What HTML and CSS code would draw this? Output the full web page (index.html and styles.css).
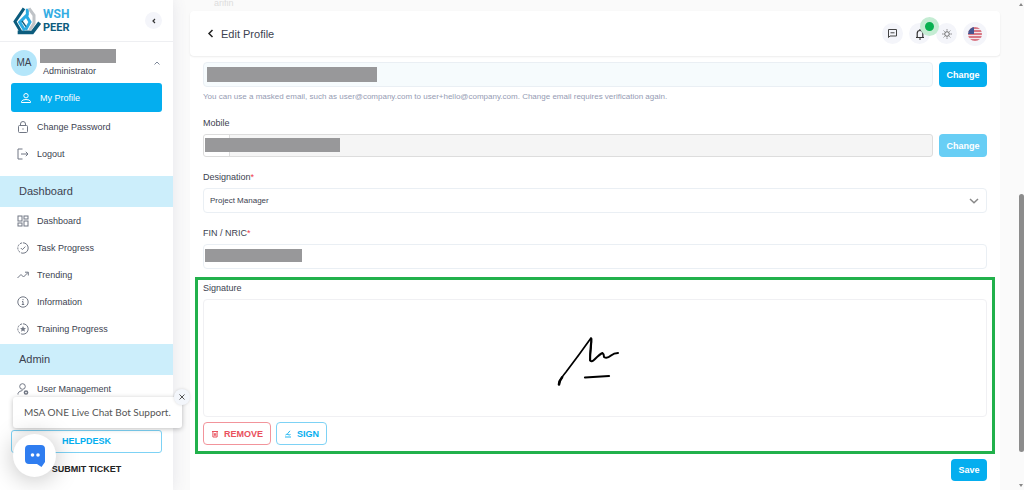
FILE: index.html
```html
<!DOCTYPE html>
<html lang="en">
<head>
  <meta charset="UTF-8">
  <meta name="viewport" content="width=device-width, initial-scale=1">
  <title>Edit Profile - WSH Peer</title>
  <link rel="stylesheet" href="styles.css">
</head>
<body>

  <aside class="sidebar">
    <div class="brand">
      <svg class="brand-mark" viewBox="40 20 84 84" fill="none" stroke-width="9">
        <path d="M73 24L46 64L63 93" stroke="#0c5c7d"/>
        <path d="M54 96H98L120 67" stroke="#0c5c7d" stroke-width="11"/>
        <path d="M83 25V43L60 66L75 90" stroke="#29abe2"/>
        <path d="M80 46L91 65L78 88" stroke="#29abe2"/>
        <path d="M88 24L103 45V69L90 90" stroke="#bfc3c7"/>
        <path d="M67 62L79 79" stroke="#0c5c7d" stroke-width="4"/>
      </svg>
      <div class="brand-name">
        <span class="brand-top">WSH</span>
        <span class="brand-bottom">PEER</span>
      </div>
      <button class="round-btn collapse-btn" aria-label="Collapse menu">
        <svg width="8" height="8" viewBox="0 0 8 8" fill="none" stroke="#333" stroke-width="1.2"><path d="M5 2L3 4L5 6"/></svg>
      </button>
    </div>

    <div class="user">
      <span class="avatar">MA</span>
      <div class="user-info">
        <span class="redacted user-name"></span>
        <span class="user-role">Administrator</span>
      </div>
      <svg class="user-arrow" width="6" height="4" viewBox="0 0 6 4" fill="none" stroke="#7d8799"><path d="M.5 3.5L3 1L5.500 3.500"/></svg>
    </div>

    <nav class="menu menu-user">
      <a class="menu-item active" href="#">
        <svg viewBox="0 0 12 12"><circle cx="6" cy="3.700" r="2.200"/><path d="M1.500 10.500V9.500Q2 7.500 6 7.500T10.500 9.500V10.500Z"/></svg>
        My Profile
      </a>
      <a class="menu-item" href="#">
        <svg viewBox="0 0 12 12"><rect x="1.500" y="4.500" width="9" height="7" rx="1"/><path d="M3.500 4.500V3A2.500 2.500 0 0 1 8.500 3V4.500M6 7.300V8.700"/></svg>
        Change Password
      </a>
      <a class="menu-item" href="#">
        <svg viewBox="0 0 12 12"><path d="M5.500 1H1V11H5.500M4 6H11M8.800 3.800L11 6L8.800 8.200"/></svg>
        Logout
      </a>
    </nav>

    <h2 class="menu-title">Dashboard</h2>
    <nav class="menu">
      <a class="menu-item" href="#">
        <svg viewBox="0 0 12 12"><rect x="1" y="1" width="4" height="5"/><rect x="7" y="1" width="4" height="3"/><rect x="1" y="8" width="4" height="3"/><rect x="7" y="6" width="4" height="5"/></svg>
        Dashboard
      </a>
      <a class="menu-item" href="#">
        <svg viewBox="0 0 12 12"><path d="M6 .8A5.200 5.200 0 0 1 6 11.200"/><path d="M6 11.200A5.200 5.200 0 0 1 6 .8" stroke-dasharray="2.200 1"/><path d="M3.800 6L5.400 7.600L8.300 4.600"/></svg>
        Task Progress
      </a>
      <a class="menu-item" href="#">
        <svg viewBox="0 0 12 12"><path d="M.5 9L4 5.500L6.500 8L11 3.500M8 3.200H11.300V6.500"/></svg>
        Trending
      </a>
      <a class="menu-item" href="#">
        <svg viewBox="0 0 12 12"><circle cx="6" cy="6" r="5.200"/><path d="M5 5.500H6V8.500M4.800 8.500H7.200M6 3V4.200"/></svg>
        Information
      </a>
      <a class="menu-item" href="#">
        <svg viewBox="0 0 12 12"><path d="M6 .8A5.200 5.200 0 0 1 6 11.200"/><path d="M6 11.200A5.200 5.200 0 0 1 6 .8" stroke-dasharray="2.200 1"/><path class="solid" d="M6 3L6.900 5L9 5.200L7.400 6.600L7.900 8.700L6 7.600L4.100 8.700L4.600 6.600L3 5.200L5.100 5Z"/></svg>
        Training Progress
      </a>
    </nav>

    <h2 class="menu-title">Admin</h2>
    <nav class="menu">
      <a class="menu-item" href="#">
        <svg viewBox="0 0 12 12"><circle cx="5.500" cy="3.500" r="2.800"/><path d="M1 11.500V10.500Q1.500 8 5.500 7.500"/><circle cx="9" cy="9.500" r="1.600" stroke-width="1.500"/></svg>
        User Management
      </a>
    </nav>

    <div class="sidebar-footer">
      <a class="helpdesk" href="#">HELPDESK</a>
      <a class="ticket" href="#">SUBMIT TICKET</a>
    </div>

    <!-- chat bot -->
    <div class="chat-message">
      MSA ONE Live Chat Bot Support.
      <button class="chat-close" aria-label="Close message">
        <svg width="6" height="6" viewBox="0 0 6 6" fill="none" stroke="#555"><path d="M.5 .5L5.500 5.500M5.500 .5L.5 5.500"/></svg>
      </button>
    </div>
    <button class="chat-btn" aria-label="Open chat">
      <svg width="22" height="24" viewBox="0 0 22 24">
        <path d="M5 1H17Q21 1 21 5V18L17.500 23L13 20H5Q1 20 1 16V5Q1 1 5 1Z" fill="#2f7df0"/>
        <circle cx="8.500" cy="11" r="1.800" fill="#fff"/>
        <circle cx="14" cy="11" r="1.800" fill="#fff"/>
      </svg>
    </button>
  </aside>

  <main class="main">
    <div class="scrolled-text">arifin</div>

    <header class="topbar">
      <a class="back" href="#" aria-label="Back">
        <svg width="7" height="10" viewBox="0 0 7 10" fill="none" stroke="#222" stroke-width="1.500"><path d="M5.500 1L2 4.500L5.500 8"/></svg>
      </a>
      <h1>Edit Profile</h1>
      <div class="actions">
        <button class="round-btn" aria-label="Messages">
          <svg width="11" height="11" viewBox="0 0 11 11" fill="none" stroke="#444"><path d="M1.500 9.500V1.500H9.500V8H3ZM3.500 4.800H7.500"/></svg>
        </button>
        <button class="round-btn" aria-label="Notifications">
          <svg width="10" height="12" viewBox="0 0 10 12" fill="none" stroke="#333" stroke-width="1.200"><path d="M1 9.500H9M2.200 9.500V5.500Q2.200 2.500 5 2.500T7.800 5.500V9.500M5 1V2.500M4 11H6"/></svg>
          <span class="dot"></span>
        </button>
        <button class="round-btn" aria-label="Theme">
          <svg width="10" height="10" viewBox="0 0 10 10" fill="none" stroke="#666"><circle cx="5" cy="5" r="2.300"/><path d="M5 .3V1.500M5 8.500V9.700M.3 5H1.500M8.500 5H9.700M1.700 1.700L2.500 2.500M7.500 7.500L8.300 8.300M1.700 8.300L2.500 7.500M7.500 2.500L8.300 1.700"/></svg>
        </button>
        <button class="round-btn lang" aria-label="Language">
          <svg width="14" height="14" viewBox="0 0 14 14">
            <clipPath id="flag"><circle cx="7" cy="7" r="7"/></clipPath>
            <g clip-path="url(#flag)">
              <rect width="14" height="14" fill="#f3e6ea"/>
              <path d="M0 1H14M0 4H14M0 7H14M0 10H14M0 13H14" stroke="#d05464" stroke-width="1.500"/>
              <rect width="6" height="7" fill="#465590"/>
            </g>
          </svg>
        </button>
      </div>
    </header>

    <form class="form">
      <div class="field">
        <div class="row">
          <div class="control">
            <input class="input email" type="email" aria-label="Email" readonly>
            <span class="redacted redacted-email"></span>
          </div>
          <button class="btn" type="button">Change</button>
        </div>
        <p class="hint">You can use a masked email, such as user@company.com to user+hello@company.com. Change email requires verification again.</p>
      </div>

      <div class="field">
        <label for="mobile">Mobile</label>
        <div class="row">
          <div class="control">
            <input class="input mobile" id="mobile" type="tel" disabled>
            <span class="redacted redacted-mobile"></span>
          </div>
          <button class="btn" type="button" disabled>Change</button>
        </div>
      </div>

      <div class="field">
        <label for="designation">Designation<span class="required">*</span></label>
        <div class="control">
          <select class="input" id="designation">
            <option>Project Manager</option>
          </select>
          <svg class="select-arrow" width="10" height="6" viewBox="0 0 10 6" fill="none" stroke="#888" stroke-width="1.500"><path d="M1 1L5 4.700L9 1"/></svg>
        </div>
      </div>

      <div class="field">
        <label for="nric">FIN / NRIC<span class="required">*</span></label>
        <div class="control">
          <input class="input" id="nric" type="text">
          <span class="redacted redacted-nric"></span>
        </div>
      </div>

      <section class="signature">
        <h3>Signature</h3>
        <div class="signature-pad">
          <svg width="64" height="50" viewBox="0 0 64 50" fill="none" stroke="#000" stroke-linecap="round" stroke-linejoin="round">
            <path d="M2 48.500Q2 45 5 41.500" stroke-width="2.600"/>
            <path d="M2.500 46Q4 42 9 36Q22 19 34 2Q35 6 34 12T33 24.500" stroke-width="1.700"/>
            <path d="M34.500 3Q33 15 33.200 24Q34 27 38 23Q43 18 45.500 17Q47 18 47 21Q50 23 54 19.500Q57 17 61 17" stroke-width="2"/>
            <path d="M28 41.500L52 40" stroke-width="2.200"/>
          </svg>
        </div>
        <div class="signature-actions">
          <button class="btn-outline remove" type="button">
            <svg width="8" height="8" viewBox="0 0 8 8" fill="none" stroke="currentColor"><path d="M1 1.500H7M1.900 2V7H6.100V2M3.400 3.200V5.800M4.700 3.200V5.800"/></svg>
            REMOVE
          </button>
          <button class="btn-outline sign" type="button">
            <svg width="8" height="8" viewBox="0 0 8 8" fill="none" stroke="currentColor"><path d="M1 7H7M1.500 5Q3 3.500 4 4.500T6.500 4.500M3.500 3.800L6 .8" stroke-width=".9"/></svg>
            SIGN
          </button>
        </div>
      </section>

      <button class="btn save" type="submit">Save</button>
    </form>
  </main>

  <div class="scrollbar">
    <span class="arrow-up"></span>
    <span class="thumb"></span>
    <span class="arrow-down"></span>
  </div>

</body>
</html>
```

FILE: styles.css
```css
* {
  box-sizing: border-box;
}

body {
  margin: 0;
  display: flex;
  height: 100vh;
  overflow: hidden;
  font-family: "Liberation Sans", Arial, sans-serif;
  font-size: 9px;
  color: #3c4250;
  background-color: #fafafa;
}

h1, h2, h3, p {
  margin: 0;
  font-weight: normal;
}

a {
  color: inherit;
  text-decoration: none;
}

button, input, select {
  font-family: inherit;
  font-size: inherit;
  padding: 0;
}

button {
  cursor: pointer;
}

.redacted {
  background-color: #98989a;
}

/* sidebar */
.sidebar {
  position: relative;
  display: flex;
  flex-direction: column;
  width: 173px;
  flex-shrink: 0;
  background-color: #fff;
  box-shadow: 0 0 14px rgba(80,80,120,0.12);
}

.brand {
  display: flex;
  align-items: center;
  height: 42px;
  padding: 0 11px 0 13px;
  border-bottom: 1px solid #eeeff2;
}

.brand-mark {
  width: 28px;
  height: 28px;
}

.brand-name {
  display: flex;
  flex-direction: column;
  margin-left: 2px;
  font-family: Roboto, "Liberation Sans", sans-serif;
  font-weight: bold;
  line-height: 13px;
}

.brand-top {
  font-size: 12px;
  color: #34ade3;
}

.brand-bottom {
  font-size: 11px;
  color: #0c5c7d;
}

.round-btn {
  position: relative;
  display: flex;
  align-items: center;
  justify-content: center;
  width: 21px;
  height: 21px;
  border: none;
  border-radius: 50%;
  background-color: #f4f5fa;
}

.collapse-btn {
  width: 17px;
  height: 17px;
  margin-left: auto;
}

.user {
  display: flex;
  align-items: center;
  padding: 7px 13px 6px 11px;
}

.avatar {
  width: 26px;
  height: 26px;
  border-radius: 50%;
  background-color: #b4e6fa;
  font-size: 10px;
  line-height: 26px;
  text-align: center;
}

.user-info {
  display: flex;
  flex-direction: column;
  margin-left: 3px;
}

.user-name {
  width: 76px;
  height: 14px;
}

.user-role {
  padding: 2px 0 0 3px;
  line-height: 12px;
}

.user-arrow {
  margin-left: auto;
}

.menu {
  display: flex;
  flex-direction: column;
}

.menu-user {
  margin-bottom: 7px;
}

.menu-item {
  display: flex;
  align-items: center;
  gap: 8px;
  height: 27px;
  padding-left: 17px;
}

.menu-item svg {
  width: 12px;
  height: 12px;
  fill: none;
  stroke: #717784;
}

.menu-item svg .solid {
  fill: #717784;
  stroke: none;
}

.menu-item.active {
  height: 29px;
  margin: 0 11px 1px;
  padding-left: 9px;
  border-radius: 3px;
  background-color: #04aeef;
  color: #fff;
}

.menu-item.active svg {
  stroke: #fff;
}

.menu-title {
  flex-shrink: 0;
  margin-top: 2px;
  padding-left: 19px;
  font-size: 11px;
  line-height: 31px;
  background-color: #cceefb;
}

.sidebar-footer {
  display: flex;
  flex-direction: column;
  gap: 8px;
  margin-top: auto;
  padding: 0 11px 13px;
  font-weight: bold;
  text-align: center;
}

.helpdesk {
  border: 1px solid #7dd2f5;
  border-radius: 3px;
  color: #04aeef;
  line-height: 21px;
}

.ticket {
  color: #222;
  line-height: 16px;
}

/* chat bot */
.chat-message {
  position: absolute;
  left: 13px;
  bottom: 62px;
  padding: 0 11px;
  border-radius: 3px;
  background-color: #fff;
  box-shadow: 0 1px 5px rgba(0,0,0,0.25);
  font-family: Lato, "Open Sans", sans-serif;
  font-size: 10px;
  line-height: 31px;
  white-space: nowrap;
  color: #555;
}

.chat-close {
  position: absolute;
  top: -8px;
  right: -8px;
  display: flex;
  align-items: center;
  justify-content: center;
  width: 16px;
  height: 16px;
  border: none;
  border-radius: 50%;
  background-color: #f3f6fb;
  box-shadow: 0 0 3px rgba(0,0,0,0.15);
}

.chat-btn {
  position: absolute;
  left: 13px;
  bottom: 13px;
  display: flex;
  align-items: center;
  justify-content: center;
  width: 43px;
  height: 43px;
  border: none;
  border-radius: 50%;
  background-color: #fff;
  box-shadow: 0 2px 24px rgba(0,0,0,0.25);
}

/* main */
.main {
  display: flex;
  flex-direction: column;
  flex: 1;
  min-width: 0;
  margin: 0 18px 0 17px;
}

.scrolled-text {
  height: 11px;
  padding-left: 24px;
  line-height: 6px;
  color: #ddd;
}

.topbar {
  display: flex;
  align-items: center;
  height: 45px;
  padding: 0 13px 0 17px;
  border-radius: 4px;
  background-color: #fff;
  box-shadow: 0 1px 2px rgba(0,0,0,0.08);
  z-index: 1;
}

.back {
  display: flex;
}

.topbar h1 {
  margin-left: 7px;
  font-size: 11px;
}

.actions {
  display: flex;
  align-items: center;
  gap: 6px;
  margin-left: auto;
}

.round-btn.lang {
  width: 24px;
  height: 24px;
}

.dot {
  position: absolute;
  top: -6px;
  right: -9px;
  width: 19px;
  height: 19px;
  border: 5px solid #c4ecd3;
  border-radius: 50%;
  background-color: #08b050;
  z-index: 1;
}

.form {
  display: flex;
  flex-direction: column;
  gap: 13px;
  flex: 1;
  padding: 6px 13px;
  background-color: #fff;
}

.field {
  display: flex;
  flex-direction: column;
}

.field label {
  margin-bottom: 4px;
  line-height: 14px;
}

.required {
  color: #f0394d;
}

.row {
  display: flex;
  gap: 6px;
}

.control {
  position: relative;
  display: flex;
  flex: 1;
}

.input {
  width: 100%;
  height: 25px;
  padding: 0 6px;
  border: 1px solid #eaeff4;
  border-radius: 4px;
  background-color: #fff;
  color: #3c4250;
  font-size: 8px;
  appearance: none;
}

.input.email {
  background-color: #f6fbfd;
}

.input.mobile {
  height: 23px;
  border-color: #ddd;
  border-radius: 3px;
  background: linear-gradient(to right, #fff 25px, #ddd 25px, #ddd 26px, #f5f5f5 26px);
}

.control .redacted {
  position: absolute;
  top: 5px;
  left: 2px;
}

.control .redacted-email {
  left: 4px;
  width: 170px;
  height: 15px;
}

.control .redacted-mobile {
  top: 4px;
  width: 135px;
  height: 14px;
}

.control .redacted-nric {
  width: 97px;
  height: 13px;
}

.select-arrow {
  position: absolute;
  top: 10px;
  right: 8px;
  pointer-events: none;
}

.hint {
  margin-top: 3px;
  font-size: 8px;
  line-height: 13px;
  color: #959bb3;
}

.btn {
  width: 48px;
  border: none;
  border-radius: 4px;
  background-color: #04aeef;
  color: #fff;
  font-weight: bold;
}

.btn:disabled {
  background-color: #68cef5;
}

.signature {
  margin: -5px -8px 0;
  padding: 1px 5px 6px;
  border: 3px solid #22b14c;
}

.signature h3 {
  margin-bottom: 4px;
  font-size: 9px;
  line-height: 14px;
}

.signature-pad {
  display: flex;
  align-items: center;
  justify-content: center;
  height: 118px;
  padding: 6px 12px 0 0;
  border: 1px solid #f0f0f3;
  border-radius: 4px;
}

.signature-actions {
  display: flex;
  gap: 5px;
  margin-top: 5px;
}

.btn-outline {
  display: flex;
  align-items: center;
  gap: 5px;
  height: 23px;
  padding: 0 7px;
  border: 1px solid;
  border-radius: 4px;
  background-color: #fff;
  font-weight: bold;
}

.btn-outline.remove {
  border-color: #f2949b;
  color: #e9505c;
}

.btn-outline.sign {
  border-color: #7dd2f5;
  color: #04aeef;
}

.save {
  width: 36px;
  height: 22px;
  margin-top: -8px;
  align-self: flex-end;
}

/* page scrollbar */
.scrollbar {
  display: flex;
  flex-direction: column;
  align-items: center;
  width: 6px;
  padding: 3px 0;
}

.thumb {
  width: 5px;
  height: 258px;
  margin: auto 0 32px;
  border-radius: 3px;
  background-color: #8c8c8c;
}

.arrow-up, .arrow-down {
  border-left: 2px solid transparent;
  border-right: 2px solid transparent;
}

.arrow-up {
  border-bottom: 3px solid #888;
}

.arrow-down {
  border-top: 3px solid #888;
}
```
